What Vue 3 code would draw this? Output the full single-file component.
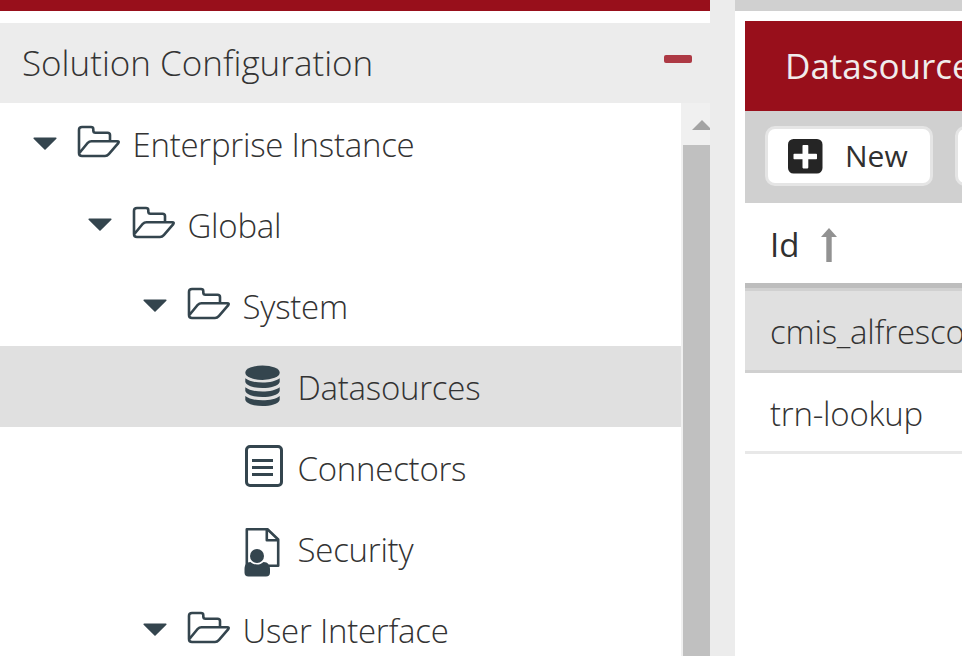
<script setup>
const nodes = [
  { label: 'Enterprise Instance', level: 0, icon: 'folder' },
  { label: 'Global', level: 1, icon: 'folder' },
  { label: 'System', level: 2, icon: 'folder' },
  { label: 'Datasources', level: 3, icon: 'database', selected: true },
  { label: 'Connectors', level: 3, icon: 'list' },
  { label: 'Security', level: 3, icon: 'security' },
  { label: 'User Interface', level: 2, icon: 'folder' },
]
const rows = [
  { id: 'cmis_alfresco', selected: true },
  { id: 'trn-lookup', selected: false },
]
</script>

<template>
  <div class="app">
    <aside class="side">
      <div class="brand"></div>
      <header class="side-head">
        <h1>Solution Configuration</h1>
        <button class="collapse" aria-label="Collapse"></button>
      </header>
      <div class="side-body">
        <ul class="tree">
          <li v-for="n in nodes" :key="n.label" class="node" :class="['level-' + n.level, { selected: n.selected }]">
            <svg v-if="n.icon === 'folder'" class="caret" width="24" height="14" viewBox="0 0 24 14">
              <path d="M1.2 1.2H22.8L12 12Z" fill="#34454e" stroke="#34454e" stroke-width="1.6" stroke-linejoin="round" />
            </svg>
            <span class="icon" :class="'icon-' + n.icon">
              <svg v-if="n.icon === 'folder'" width="44" height="34" viewBox="0 0 44 34" fill="none" stroke="#34454e" stroke-width="2.600" stroke-linejoin="round">
                <path d="M33 16V10Q33 7.800 30.500 7.800H18.500Q16.300 7.800 16.300 5.600V4.200Q16.300 2 14 2H5Q2 2 2 5V28Q2 31 5 31H28Q30.200 31 31.800 29.200L41.300 18.200Q42.500 16.200 40.200 16.200H14.500Q12.300 16.200 10.800 17.800L2.200 28.300" />
              </svg>
              <svg v-else-if="n.icon === 'database'" width="36" height="42" viewBox="0 0 36 42" fill="#34454e">
                <ellipse cx="17.500" cy="7.700" rx="17.200" ry="7.200" />
                <path d="M.3 13.300C7 19 28 19 34.700 13.300V17C32 25 3 25 .3 17Z" />
                <path d="M.3 22.300C7 28 28 28 34.700 22.300V26C32 34 3 34 .3 26Z" />
                <path d="M.3 31C7 36.800 28 36.800 34.700 31V35C32 43 3 43 .3 35Z" />
              </svg>
              <svg v-else-if="n.icon === 'list'" width="38" height="42" viewBox="0 0 38 42" fill="none" stroke="#34454e" stroke-width="3">
                <rect x="1.500" y="1.500" width="35" height="39" rx="3.500" />
                <path d="M7 15.500H28M7 22.500H28M7 29.500H28" />
              </svg>
              <svg v-else width="36" height="50" viewBox="0 0 36 50" overflow="visible">
                <path d="M1.800 40V2.200H22.500L33.200 12.500V38.800H24M21.800 2.200V13.200H33.200" fill="none" stroke="#34454e" stroke-width="2.600" stroke-linejoin="round" />
                <g fill="#34454e">
                  <circle cx="12" cy="29" r="7" />
                  <path d="M5.500 35C9 38.400 15 38.400 18.500 35C23 35 25 38 25 42V45.500Q25 49.500 21 49.500H3.500Q-.5 49.500 -.5 45.500V42C-.5 38 1.500 35 5.500 35Z" />
                </g>
              </svg>
            </span>
            <span class="label">{{ n.label }}</span>
          </li>
        </ul>
        <div class="scroll">
          <svg class="scroll-up" width="27" height="42" viewBox="0 0 27 42">
            <path d="M9 27L19 17L29 27Z" fill="#a3a3a3" />
          </svg>
          <div class="thumb"></div>
        </div>
      </div>
    </aside>
    <div class="splitter"></div>
    <main class="main">
      <div class="top-strip"></div>
      <section class="panel">
        <h2 class="panel-title">Datasources</h2>
        <div class="toolbar">
          <button class="btn">
            <svg width="35" height="35" viewBox="0 0 35 35">
              <rect width="34.500" height="34.500" rx="5.500" fill="#252525" />
              <path d="M16 6H19.500Q20.300 6 20.300 6.800V14.700H28.200Q29 14.700 29 15.500V19.500Q29 20.300 28.200 20.300H20.300V28.600Q20.300 29.400 19.500 29.400H15.300Q14.500 29.400 14.500 28.600V20.300H6.300Q5.500 20.300 5.500 19.500V15.500Q5.500 14.700 6.300 14.700H14.500V6.800Q14.500 6 15.300 6Z" fill="#fff" />
            </svg>
            <span>New</span>
          </button>
          <button class="btn"></button>
        </div>
        <div class="thead">
          <span>Id</span>
          <svg width="16" height="34" viewBox="0 0 16 34">
            <path d="M8 0L16 9H10.700V34H5.300V9H0Z" fill="#929292" />
          </svg>
        </div>
        <div v-for="r in rows" :key="r.id" class="row" :class="{ selected: r.selected }">
          <span>{{ r.id }}</span>
        </div>
      </section>
    </main>
  </div>
</template>

<style>
body { margin: 0; overflow: hidden; }
</style>

<style scoped>
.app {
  display: flex;
  width: 100vw;
  height: 100vh;
  overflow: hidden;
  background: #fff;
  color: #333;
  font-family: "Open Sans", sans-serif;
  font-size: 33px;
  font-weight: 300;
  line-height: 45px;
  white-space: nowrap;
}
h1, h2, ul { margin: 0; padding: 0; font: inherit; }
.side { flex: none; width: 710px; display: flex; flex-direction: column; }
.brand { flex: none; height: 11px; margin-bottom: 12px; background: #980f1b; }
.side-head {
  flex: none;
  box-sizing: border-box;
  height: 80px;
  padding: 0 18px 0 22px;
  display: flex;
  align-items: center;
  justify-content: space-between;
  background: #ececec;
}
.side-head h1 { padding-bottom: 2px; font-size: 35px; }
.collapse { width: 28px; height: 8px; margin-bottom: 8px; padding: 0; border: 0; border-radius: 2px; background: #ad3944; }
.side-body { flex: 1; min-height: 0; display: flex; }
.tree { flex: 1; list-style: none; overflow: hidden; }
.node { height: 81px; display: flex; align-items: center; }
.node.selected { background: #e0e0e0; }
.level-0 { padding-left: 33px; }
.level-1 { padding-left: 88px; }
.level-2 { padding-left: 143px; }
.level-3 { padding-left: 245px; }
.caret { flex: none; margin-right: 20px; }
.icon { flex: none; width: 53px; padding-bottom: 3px; display: flex; align-items: center; }
.level-3 .icon { width: 50px; }
.icon-database { padding-bottom: 1px; }
.icon-security { padding: 7px 0 0; }
.label { padding: 1px 0 0 2.500px; letter-spacing: -0.25px; }
.scroll { flex: none; width: 29px; background: #f0f0f0; padding-left: 2px; box-sizing: border-box; display: flex; flex-direction: column; }
.scroll-up { flex: none; display: block; }
.thumb { flex: 1; background: #c0c0c0; }
.splitter { flex: none; width: 25px; background: #ececec; }
.main { flex: 1; min-width: 0; overflow: hidden; }
.top-strip { height: 11px; background: #d0d0d0; }
.panel { margin: 10px 0 0 10px; }
.panel-title { height: 90px; line-height: 90px; padding-left: 40px; background: #980f1b; color: #f0ecec; font-size: 35px; font-weight: 400; }
.toolbar { height: 92px; box-sizing: border-box; padding: 15px 0 0 20px; display: flex; gap: 22px; background: #d0d0d0; overflow: hidden; }
.btn {
  flex: none;
  box-sizing: border-box;
  width: 168px;
  height: 60px;
  padding: 0 0 0 20px;
  display: flex;
  align-items: center;
  gap: 22px;
  border: 3px solid #e5e5e5;
  border-radius: 10px;
  background: #fff;
  color: #303030;
  font: 400 30px/44px "Open Sans", sans-serif;
}
.thead { height: 80px; padding: 0 25px; display: flex; align-items: center; gap: 22px; border-bottom: 5px solid #bdbdbd; font-weight: 400; color: #303030; }
.thead span { padding-top: 3px; }
.thead svg { margin-top: 4px; }
.row { box-sizing: border-box; height: 81px; padding-left: 25px; display: flex; align-items: center; border-bottom: 3px solid #e8e8e8; letter-spacing: -0.22px; }
.row.selected { height: 85px; border-top: 3px solid #d0d0d0; border-bottom-color: #d0d0d0; background: #e0e0e0; }
.row span { padding-top: 3px; }
.row.selected span { padding-top: 1px; }
</style>
